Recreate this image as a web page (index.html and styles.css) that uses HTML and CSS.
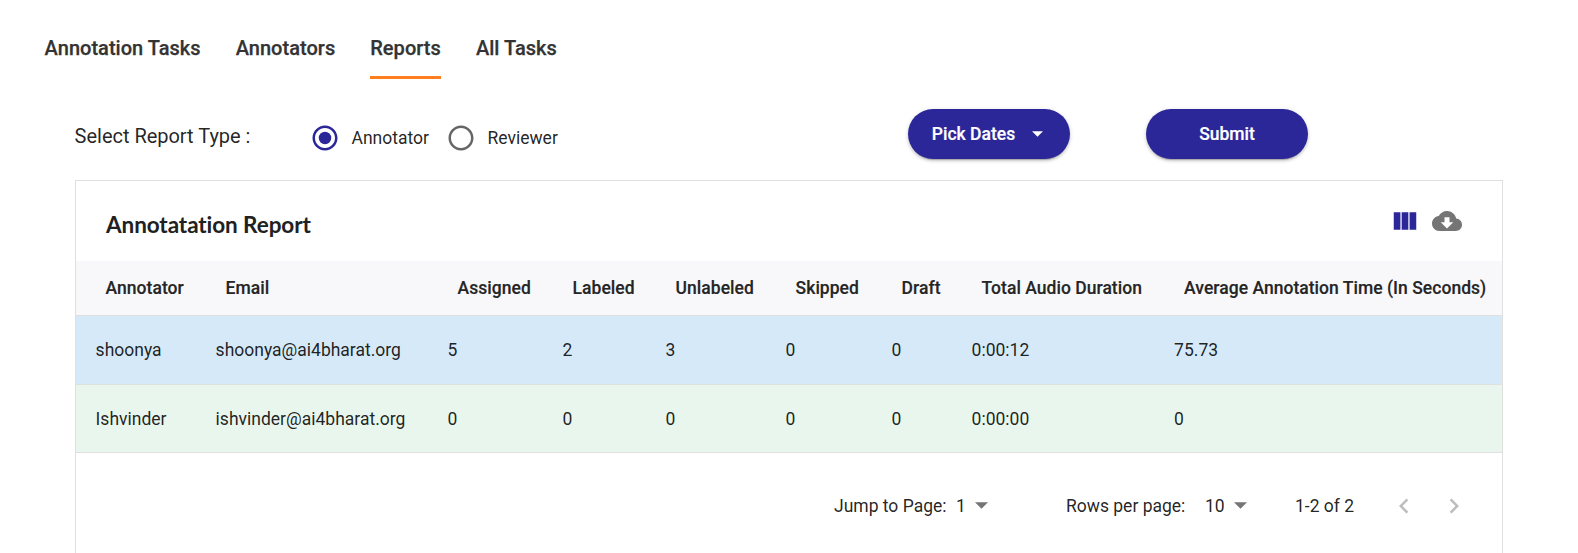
FILE: index.html
```html
<!DOCTYPE html>
<html lang="en">
<head>
<meta charset="utf-8">
<title>Reports</title>
<link rel="stylesheet" href="styles.css">
</head>
<body>
<nav class="tabs">
  <a class="tab">Annotation Tasks</a>
  <a class="tab">Annotators</a>
  <a class="tab active">Reports</a>
  <a class="tab">All Tasks</a>
</nav>
<section class="filters">
  <span class="filter-label">Select Report Type :</span>
  <div class="radios">
    <label class="radio"><svg class="dot checked" viewBox="0 0 24 24"><path d="M12 2C6.48 2 2 6.48 2 12s4.48 10 10 10 10-4.48 10-10S17.52 2 12 2zm0 18c-4.42 0-8-3.58-8-8s3.58-8 8-8 8 3.58 8 8-3.58 8-8 8z"/><circle cx="12" cy="12" r="5"/></svg><span>Annotator</span></label>
    <label class="radio"><svg class="dot" viewBox="0 0 24 24"><path d="M12 2C6.48 2 2 6.48 2 12s4.48 10 10 10 10-4.48 10-10S17.52 2 12 2zm0 18c-4.42 0-8-3.58-8-8s3.58-8 8-8 8 3.58 8 8-3.58 8-8 8z"/></svg><span>Reviewer</span></label>
  </div>
  <div class="buttons">
    <button class="btn">Pick Dates <svg class="caret" viewBox="0 0 10 5"><path d="M0 0h10L5 5z"/></svg></button>
    <button class="btn">Submit</button>
  </div>
</section>
<main class="card">
  <header class="toolbar">
    <h1 class="title">Annotatation Report</h1>
    <div class="tools">
      <svg class="tool columns" viewBox="0 0 24 24"><path d="M14.67 5v14H9.33V5h5.34zm1 14H21V5h-5.33v14zm-7.34 0V5H3v14h5.33z"/></svg>
      <svg class="tool" viewBox="0 0 24 24"><path d="M19.35 10.04C18.67 6.59 15.64 4 12 4 9.11 4 6.6 5.64 5.35 8.04 2.34 8.36 0 10.91 0 14c0 3.31 2.69 6 6 6h13c2.76 0 5-2.24 5-5 0-2.64-2.05-4.78-4.65-4.96zM17 13l-5 5-5-5h3V9h4v4h3z"/></svg>
    </div>
  </header>
  <table class="table">
    <colgroup><col class="c1"><col class="c2"><col class="c3"><col class="c4"><col class="c5"><col class="c6"><col class="c7"><col class="c8"><col></colgroup>
    <thead><tr><th>Annotator</th><th>Email</th><th>Assigned</th><th>Labeled</th><th>Unlabeled</th><th>Skipped</th><th>Draft</th><th>Total Audio Duration</th><th>Average Annotation Time (In Seconds)</th></tr></thead>
    <tbody>
      <tr class="blue"><td>shoonya</td><td>shoonya@ai4bharat.org</td><td>5</td><td>2</td><td>3</td><td>0</td><td>0</td><td>0:00:12</td><td>75.73</td></tr>
      <tr class="green"><td>Ishvinder</td><td>ishvinder@ai4bharat.org</td><td>0</td><td>0</td><td>0</td><td>0</td><td>0</td><td>0:00:00</td><td>0</td></tr>
    </tbody>
  </table>
  <footer class="pager">
    <div class="jump"><span class="jump-label">Jump to Page:</span><span class="jump-num">1</span><svg class="arrow" viewBox="0 0 10 5"><path d="M0 0h10L5 5z"/></svg></div>
    <div class="rows"><span class="rows-label">Rows per page:</span><span class="rows-num">10</span><svg class="arrow" viewBox="0 0 10 5"><path d="M0 0h10L5 5z"/></svg></div>
    <span class="range">1-2 of 2</span>
    <svg class="chev" viewBox="0 0 24 24"><path d="M15.41 7.41L14 6l-6 6 6 6 1.41-1.41L10.83 12z"/></svg>
    <svg class="chev" viewBox="0 0 24 24"><path d="M10 6L8.59 7.41 13.17 12l-4.58 4.59L10 18l6-6z"/></svg>
  </footer>
</main>
</body>
</html>
```
FILE: styles.css
```css
* { box-sizing: border-box; }
body {
  margin: 0;
  height: 553px;
  overflow: hidden;
  background: #fff;
  color: rgba(0, 0, 0, 0.87);
  font-family: Roboto, sans-serif;
  font-size: 17.5px;
}
.tabs { display: flex; gap: 35px; height: 79px; padding: 17px 0 0 44.6px; }
.tab {
  height: 62px;
  line-height: 62px;
  font-size: 20px;
  font-weight: 500;
  letter-spacing: 0.03px;
  color: #333;
  -webkit-text-stroke: 0.25px #333;
  white-space: nowrap;
}
.active { border-bottom: 3px solid #ff7f1f; }
.filters { display: flex; height: 101px; padding: 30px 0 0 74.6px; }
.filter-label { width: 235.4px; line-height: 54px; font-size: 20px; letter-spacing: -0.02px; white-space: nowrap; }
.radios { display: flex; width: 598px; height: 58px; align-items: center; }
.radio { display: flex; align-items: center; width: 136px; }
.dot {
  flex: none;
  width: 30px;
  height: 30px;
  fill: #666;
  margin-right: 11.5px;
}
.checked { fill: #2c2799; }
.buttons { display: flex; gap: 76px; }
.btn {
  display: flex;
  align-items: center;
  justify-content: center;
  width: 162px;
  height: 50px;
  padding: 0;
  border: 0;
  border-radius: 25px;
  background: #2c2799;
  color: #fff;
  font: 500 17.5px Roboto, sans-serif;
  -webkit-text-stroke: 0.2px #fff;
  box-shadow: 0 3px 1px -2px rgba(0,0,0,.2), 0 2px 3px rgba(0,0,0,.14), 0 1px 5px rgba(0,0,0,.12);
}
.caret { width: 11px; height: 6px; margin: 0 3px 0 17px; fill: #fff; }
.card { width: 1428px; height: 400px; margin-left: 75px; border: 1px solid #e0e0e0; }
.toolbar { display: flex; justify-content: space-between; height: 80px; padding: 25px 40px 0 30px; }
.title {
  margin: 5px 0 0;
  font: 700 22.5px/28px Lato, sans-serif;
  font-variant-ligatures: none;
  letter-spacing: -0.08px;
  color: #212121;
  white-space: nowrap;
}
.tools { display: flex; gap: 12px; }
.tool { width: 30px; height: 30px; fill: #757575; }
.columns { fill: #2c2799; }
.table { width: 1426px; table-layout: fixed; border-collapse: separate; border-spacing: 0; }
.c1 { width: 120px; }
.c2 { width: 232px; }
.c3 { width: 115px; }
.c4 { width: 103px; }
.c5 { width: 120px; }
.c6 { width: 106px; }
.c7 { width: 80px; }
.c8 { width: 202.5px; }
.table th, .table td { text-align: left; white-space: nowrap; border-bottom: 1px solid #e0e0e0; }
.table th {
  height: 55px;
  padding: 0 0 0 29.6px;
  font-weight: 500;
  letter-spacing: 0.03px;
  -webkit-text-stroke: 0.2px #212121;
  background: #f8f8fb;
}
.table td { height: 69px; padding: 0 0 0 19.6px; }
.table .green td { height: 68px; }
.blue { background: #d6e9f8; }
.green { background: #e9f6ee; }
.pager { display: flex; align-items: center; height: 105px; padding-left: 758px; white-space: nowrap; }
.jump { display: flex; align-items: center; width: 232px; }
.jump-label { width: 122px; }
.jump-num { width: 19px; }
.rows { display: flex; align-items: center; width: 229px; }
.rows-label { width: 139px; }
.rows-num { width: 29px; }
.arrow { width: 13px; height: 7px; fill: #757575; }
.range { width: 94px; }
.chev { width: 30px; height: 30px; margin-right: 20px; fill: #bdbdbd; }
```
